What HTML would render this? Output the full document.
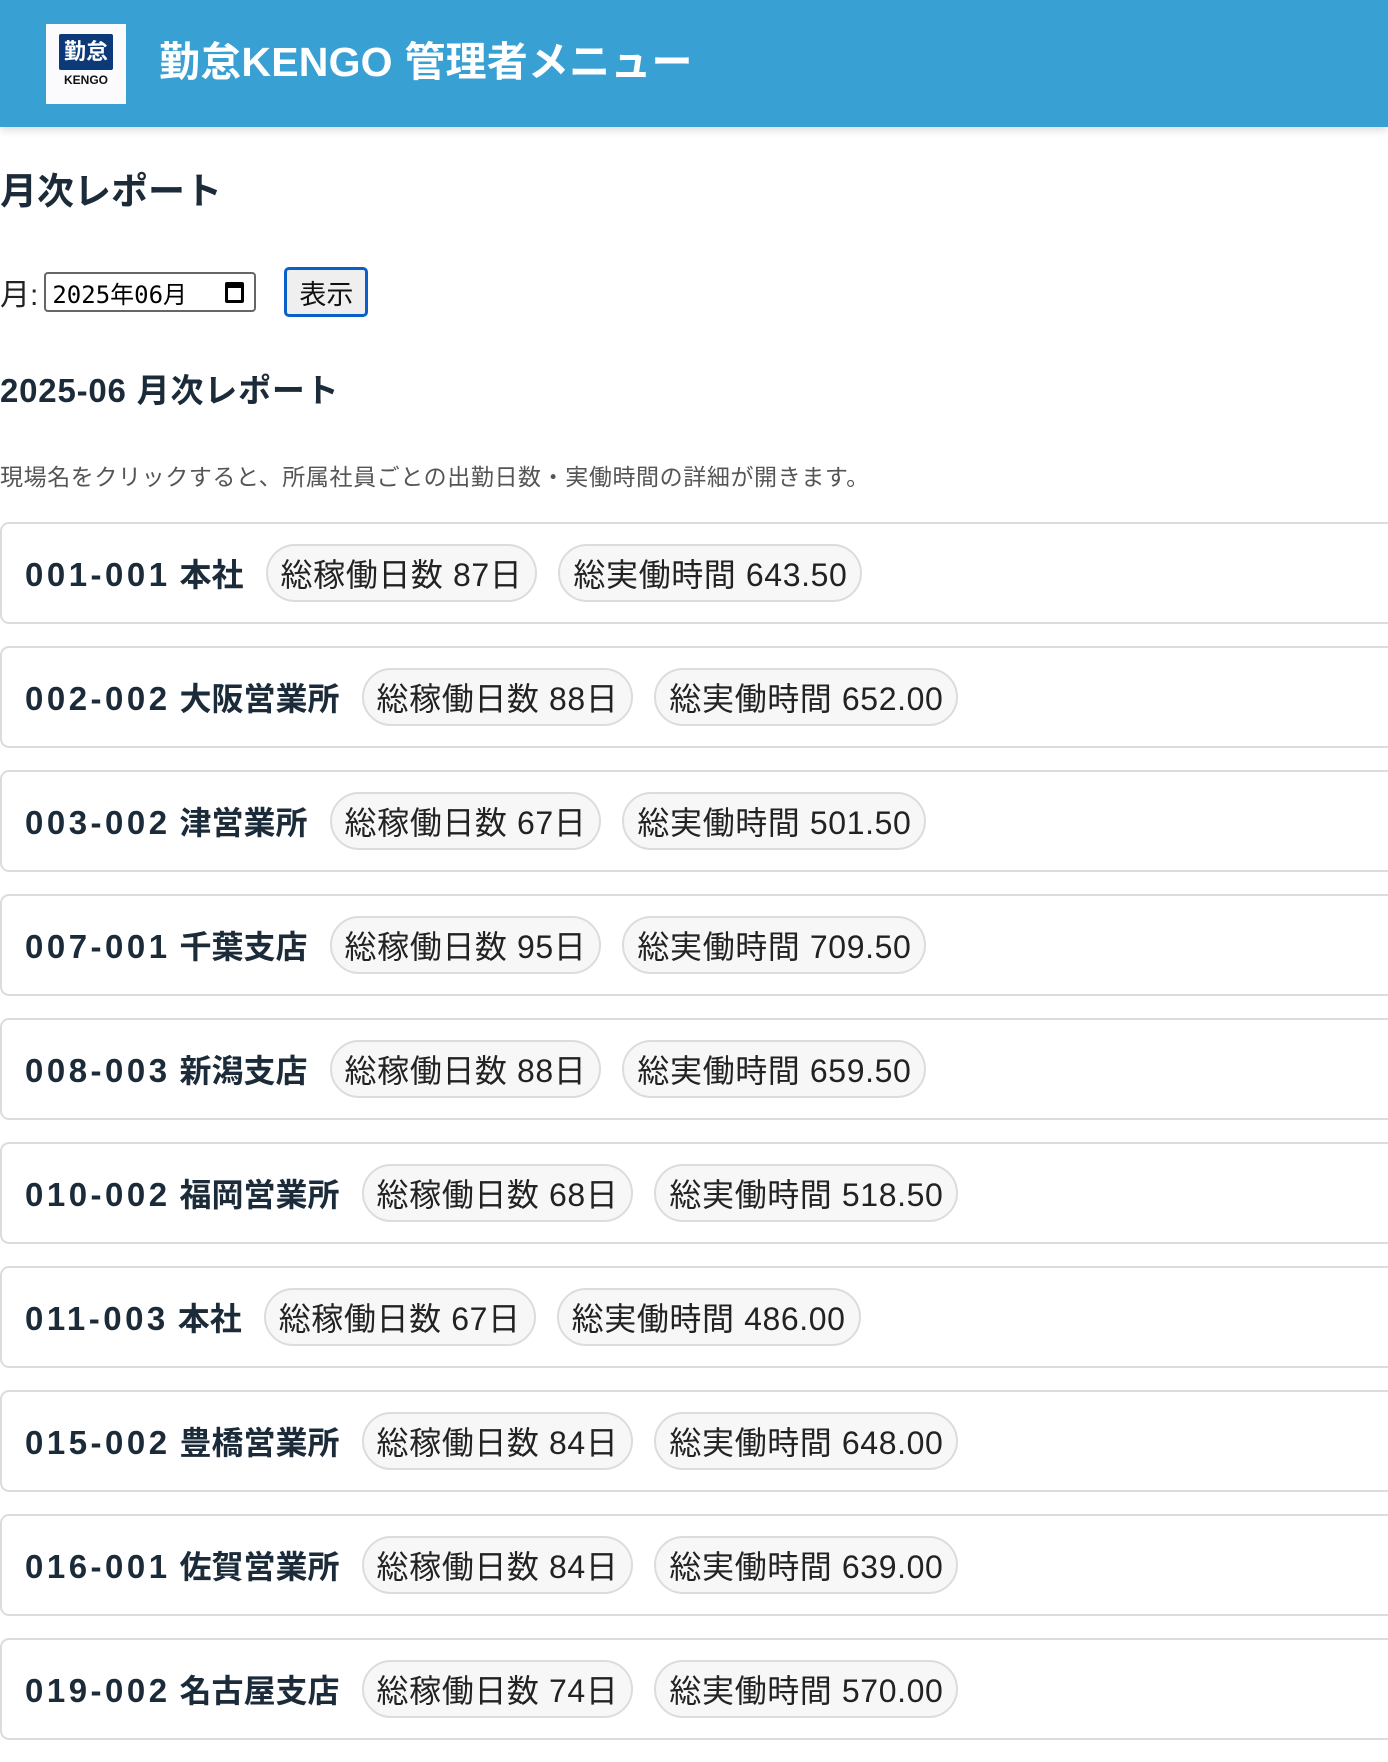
<!DOCTYPE html>
<html><head><meta charset="utf-8"><style>
*{box-sizing:border-box}
body{margin:0;width:1388px;height:1726px;overflow:hidden;background:#fff;font-family:"Liberation Sans","Noto Sans CJK JP",sans-serif;color:#1c2b39}
.hdr{height:127px;background:#38a0d3;box-shadow:0 3px 8px rgba(0,0,0,.15);position:relative}
.logo{position:absolute;left:46px;top:24px;width:80px;height:80px;background:#fbfbfd;}
.logo .k{position:absolute;left:13px;top:10px;width:54px;height:36px;background:#0c3a78;color:#fff;font-weight:bold;font-size:22px;line-height:36px;text-align:center;border-radius:2px}
.logo .e{position:absolute;left:0;right:0;top:49px;text-align:center;font-size:12px;font-weight:bold;color:#111}
.title{position:absolute;left:159px;top:37px;color:#fff;font-weight:bold;font-size:41px;line-height:50px;letter-spacing:0.2px}
h2{margin:0;position:absolute;left:0;top:169px;font-size:37px;line-height:46px;font-weight:bold}
.row{position:absolute;left:0;top:267px;height:50px;display:flex;align-items:center;font-size:30px;color:#222}
.inp{margin-left:6px;width:212px;height:40px;border:2px solid #666;border-radius:4px;font-family:"DejaVu Sans Mono","Noto Sans CJK JP",monospace;font-size:24px;display:flex;align-items:center;padding-left:6px;position:relative;color:#000}
.cal{position:absolute;right:10px;top:8px;width:19px;height:21px;border:3px solid #000;border-top-width:6px;border-radius:2px}
.btn{margin-left:28px;width:84px;height:50px;border:3px solid #0b5fc9;border-radius:5px;background:#efefef;font-size:27px;display:flex;align-items:center;justify-content:center;color:#111}
h3{margin:0;position:absolute;left:0;top:370px;font-size:33px;line-height:42px;font-weight:bold;letter-spacing:0.8px}
.desc{position:absolute;left:0;top:462px;font-size:23px;color:#555;line-height:30px;letter-spacing:0.6px}
.cards{position:absolute;left:0;top:522px;width:1400px}
.card{height:102px;margin-bottom:22px;border:2px solid #dcdcdc;border-radius:9px;display:flex;align-items:center;padding-left:23px}
.nm{font-weight:bold;font-size:32px;margin-right:22px;white-space:nowrap}
.nm b{letter-spacing:3.5px;font-size:33px}
.pill{height:58px;border:2px solid #dcdcdc;border-radius:29px;background:#f7f7f7;padding:0 13px;font-size:32px;display:flex;align-items:center;margin-right:21px;white-space:nowrap;color:#222;letter-spacing:0.6px}
</style></head><body>
<div class="hdr"><div class="logo"><div class="k">勤怠</div><div class="e">KENGO</div></div><div class="title">勤怠KENGO 管理者メニュー</div></div>
<h2>月次レポート</h2>
<div class="row">月:<div class="inp">2025年06月<span class="cal"></span></div><div class="btn">表示</div></div>
<h3>2025-06 月次レポート</h3>
<div class="desc">現場名をクリックすると、所属社員ごとの出勤日数・実働時間の詳細が開きます。</div>
<div class="cards">
<div class="card"><span class="nm"><b>001-001</b> 本社</span><span class="pill">総稼働日数 87日</span><span class="pill">総実働時間 643.50</span></div>
<div class="card"><span class="nm"><b>002-002</b> 大阪営業所</span><span class="pill">総稼働日数 88日</span><span class="pill">総実働時間 652.00</span></div>
<div class="card"><span class="nm"><b>003-002</b> 津営業所</span><span class="pill">総稼働日数 67日</span><span class="pill">総実働時間 501.50</span></div>
<div class="card"><span class="nm"><b>007-001</b> 千葉支店</span><span class="pill">総稼働日数 95日</span><span class="pill">総実働時間 709.50</span></div>
<div class="card"><span class="nm"><b>008-003</b> 新潟支店</span><span class="pill">総稼働日数 88日</span><span class="pill">総実働時間 659.50</span></div>
<div class="card"><span class="nm"><b>010-002</b> 福岡営業所</span><span class="pill">総稼働日数 68日</span><span class="pill">総実働時間 518.50</span></div>
<div class="card"><span class="nm"><b>011-003</b> 本社</span><span class="pill">総稼働日数 67日</span><span class="pill">総実働時間 486.00</span></div>
<div class="card"><span class="nm"><b>015-002</b> 豊橋営業所</span><span class="pill">総稼働日数 84日</span><span class="pill">総実働時間 648.00</span></div>
<div class="card"><span class="nm"><b>016-001</b> 佐賀営業所</span><span class="pill">総稼働日数 84日</span><span class="pill">総実働時間 639.00</span></div>
<div class="card"><span class="nm"><b>019-002</b> 名古屋支店</span><span class="pill">総稼働日数 74日</span><span class="pill">総実働時間 570.00</span></div>
</div>
</body></html>
